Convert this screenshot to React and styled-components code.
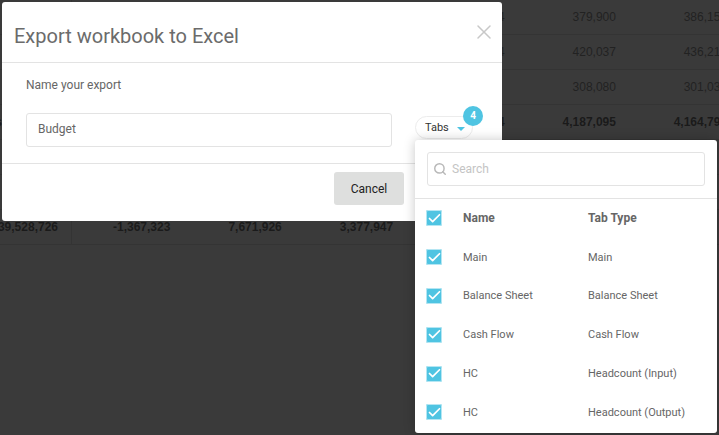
import React from "react";
import styled, { createGlobalStyle } from "styled-components";
import { X, Search, Check } from "lucide-react";

const GlobalStyle = createGlobalStyle`
  html, body { margin: 0; padding: 0; height: 100%; background: #3a3a3a; overflow: hidden; }
  body { font-family: Roboto, "Liberation Sans", sans-serif; }
`;

// only what shows round the dialog and the popover
const rows = [
  { cells: ["", "", "", "", "", "4", "379,900", "386,15"] },
  { cells: ["", "", "", "", "", "4", "420,037", "436,21"] },
  { cells: ["", "", "", "", "", "", "308,080", "301,03"] },
  { cells: ["s", "", "", "", "", "4", "4,187,095", "4,164,79"], bold: true },
  { cells: ["", "", "", "", "", "", "", ""] },
  { cells: ["", "", "", "", "", "", "", ""] },
  { cells: ["", "39,528,726", "-1,367,323", "7,671,926", "3,377,947", "", "", ""], bold: true },
];

const tabs = [
  ["Main", "Main"],
  ["Balance Sheet", "Balance Sheet"],
  ["Cash Flow", "Cash Flow"],
  ["HC", "Headcount (Input)"],
  ["HC", "Headcount (Output)"],
];

const Page = styled.div`
  position: relative;
  width: 719px;
  height: 435px;
  overflow: hidden;
  background: #3a3a3a;
`;

const Sheet = styled.div`
  display: flex;
  flex-direction: column;
  width: 747px;
  margin-left: -14px;
`;

const SheetRow = styled.div`
  display: grid;
  grid-template-columns: 16px 70px repeat(5, 111.4px) 104.4px;
  height: 35px;
  box-sizing: border-box;
  border-bottom: 1px solid #343434;
  font: ${(p) => (p.$bold ? 700 : 400)} 12px/35px "Liberation Sans", sans-serif;
  color: ${(p) => (p.$bold ? "#1a1a1a" : "#222")};
`;

const SheetCell = styled.div`
  display: flex;
  justify-content: flex-end;
  white-space: nowrap;
  padding-right: ${(p) => (p.$label ? 0 : 13)}px;
  border-right: ${(p) => (p.$divider ? "1px solid #343434" : "none")};
`;

const Dialog = styled.div`
  position: absolute;
  left: 2px;
  top: 2px;
  width: 500px;
  height: 219px;
  background: #fff;
  border-radius: 3px;
  display: flex;
  flex-direction: column;
`;

const DialogHead = styled.div`
  height: 60px;
  flex: none;
  border-bottom: 1px solid #e3e3e3;
  display: flex;
  justify-content: space-between;
  padding: 0 6px 0 12px;
`;

const Title = styled.h2`
  margin: 22px 0 0;
  font: 400 20px/24px Roboto, sans-serif;
  color: #6b6b6b;
`;

const Close = styled.button`
  display: flex;
  align-self: flex-start;
  margin-top: 18px;
  border: 0;
  padding: 0;
  background: none;
  color: #c8c8c8;
`;

const DialogBody = styled.div`
  height: 101px;
  flex: none;
  box-sizing: border-box;
  padding: 15px 24px 0;
  border-bottom: 1px solid #e3e3e3;
`;

const Label = styled.div`
  font: 400 12px/15px Roboto, sans-serif;
  color: #666;
`;

const FieldRow = styled.div`
  display: flex;
  margin-top: 20px;
`;

const NameInput = styled.div`
  width: 366px;
  height: 34px;
  box-sizing: border-box;
  border: 1px solid #e3e3e3;
  border-radius: 3px;
  padding-left: 11px;
  font: 400 12px/31px Roboto, sans-serif;
  color: #666;
`;

const DialogFoot = styled.div`
  flex: 1;
  display: flex;
  justify-content: flex-end;
  padding: 8px 98px 0 0;
`;

const CancelButton = styled.button`
  width: 70px;
  height: 33px;
  border: 0;
  border-radius: 3px;
  background: #dedfde;
  color: #222;
  font: 400 12px Roboto, sans-serif;
`;

const TabsButton = styled.div`
  position: absolute;
  left: 415px;
  top: 116px;
  width: 58px;
  height: 23px;
  box-sizing: border-box;
  border: 1px solid #ececec;
  border-radius: 12px;
  background: #fff;
  display: flex;
  align-items: center;
  padding-left: 9px;
  gap: 8px;
  font: 400 11px Roboto, sans-serif;
  color: #333;
`;

const Caret = styled.span`
  width: 0;
  height: 0;
  margin-top: 3px;
  border-left: 4px solid transparent;
  border-right: 4px solid transparent;
  border-top: 4px solid #4fc4e2;
`;

const CountBadge = styled.span`
  position: absolute;
  left: 463px;
  top: 106px;
  width: 20px;
  height: 20px;
  border-radius: 50%;
  background: #4fc4e2;
  color: #fff;
  font: 700 10px/20px Roboto, sans-serif;
  text-align: center;
`;

const Popover = styled.div`
  position: absolute;
  left: 415px;
  top: 140px;
  width: 302px;
  height: 293px;
  background: #fff;
  border-radius: 3px;
  box-shadow: 0 0 12px rgba(0, 0, 0, 0.22);
  display: flex;
  flex-direction: column;
`;

const SearchArea = styled.div`
  height: 59px;
  flex: none;
  box-sizing: border-box;
  padding: 12px 12px 0;
  border-bottom: 1px solid #e3e3e3;
`;

const SearchBox = styled.div`
  height: 34px;
  box-sizing: border-box;
  border: 1px solid #e3e3e3;
  border-radius: 3px;
  display: flex;
  align-items: center;
  padding-left: 5px;
  gap: 5px;
  color: #c4c4c4;
  font: 400 12px Roboto, sans-serif;
  svg { color: #b8b8b8; }
`;

const TabRow = styled.div`
  display: grid;
  grid-template-columns: 37px 125px 1fr;
  align-items: center;
  height: 38.8px;
  padding-left: 11px;
  font: ${(p) => (p.$head ? 700 : 400)} ${(p) => (p.$head ? 12 : 11)}px Roboto, sans-serif;
  color: #666;
`;

const Tick = styled.span`
  width: 16px;
  height: 16px;
  border-radius: 2px;
  background: #4fc4e2;
  box-shadow: 0 0 0 1px #b5e6f3 inset;
  display: flex;
  align-items: center;
  justify-content: center;
  color: #fff;
`;

export default function App() {
  return (
    <Page>
      <GlobalStyle />
      <Sheet>
        {rows.map((row, i) => (
          <SheetRow key={i} $bold={row.bold}>
            {row.cells.map((c, j) => (
              <SheetCell key={j} $label={j === 0} $divider={j === 1}>
                {c}
              </SheetCell>
            ))}
          </SheetRow>
        ))}
      </Sheet>
      <Dialog>
        <DialogHead>
          <Title>Export workbook to Excel</Title>
          <Close><X size={24} strokeWidth={1.5} /></Close>
        </DialogHead>
        <DialogBody>
          <Label>Name your export</Label>
          <FieldRow>
            <NameInput>Budget</NameInput>
          </FieldRow>
        </DialogBody>
        <DialogFoot>
          <CancelButton>Cancel</CancelButton>
        </DialogFoot>
      </Dialog>
      <TabsButton>Tabs<Caret /></TabsButton>
      <CountBadge>4</CountBadge>
      <Popover>
        <SearchArea>
          <SearchBox><Search size={14} strokeWidth={2.5} />Search</SearchBox>
        </SearchArea>
        <TabRow $head>
          <Tick><Check size={15} strokeWidth={2.8} /></Tick>
          <span>Name</span>
          <span>Tab Type</span>
        </TabRow>
        {tabs.map(([name, type], i) => (
          <TabRow key={i}>
            <Tick><Check size={15} strokeWidth={2.8} /></Tick>
            <span>{name}</span>
            <span>{type}</span>
          </TabRow>
        ))}
      </Popover>
    </Page>
  );
}
